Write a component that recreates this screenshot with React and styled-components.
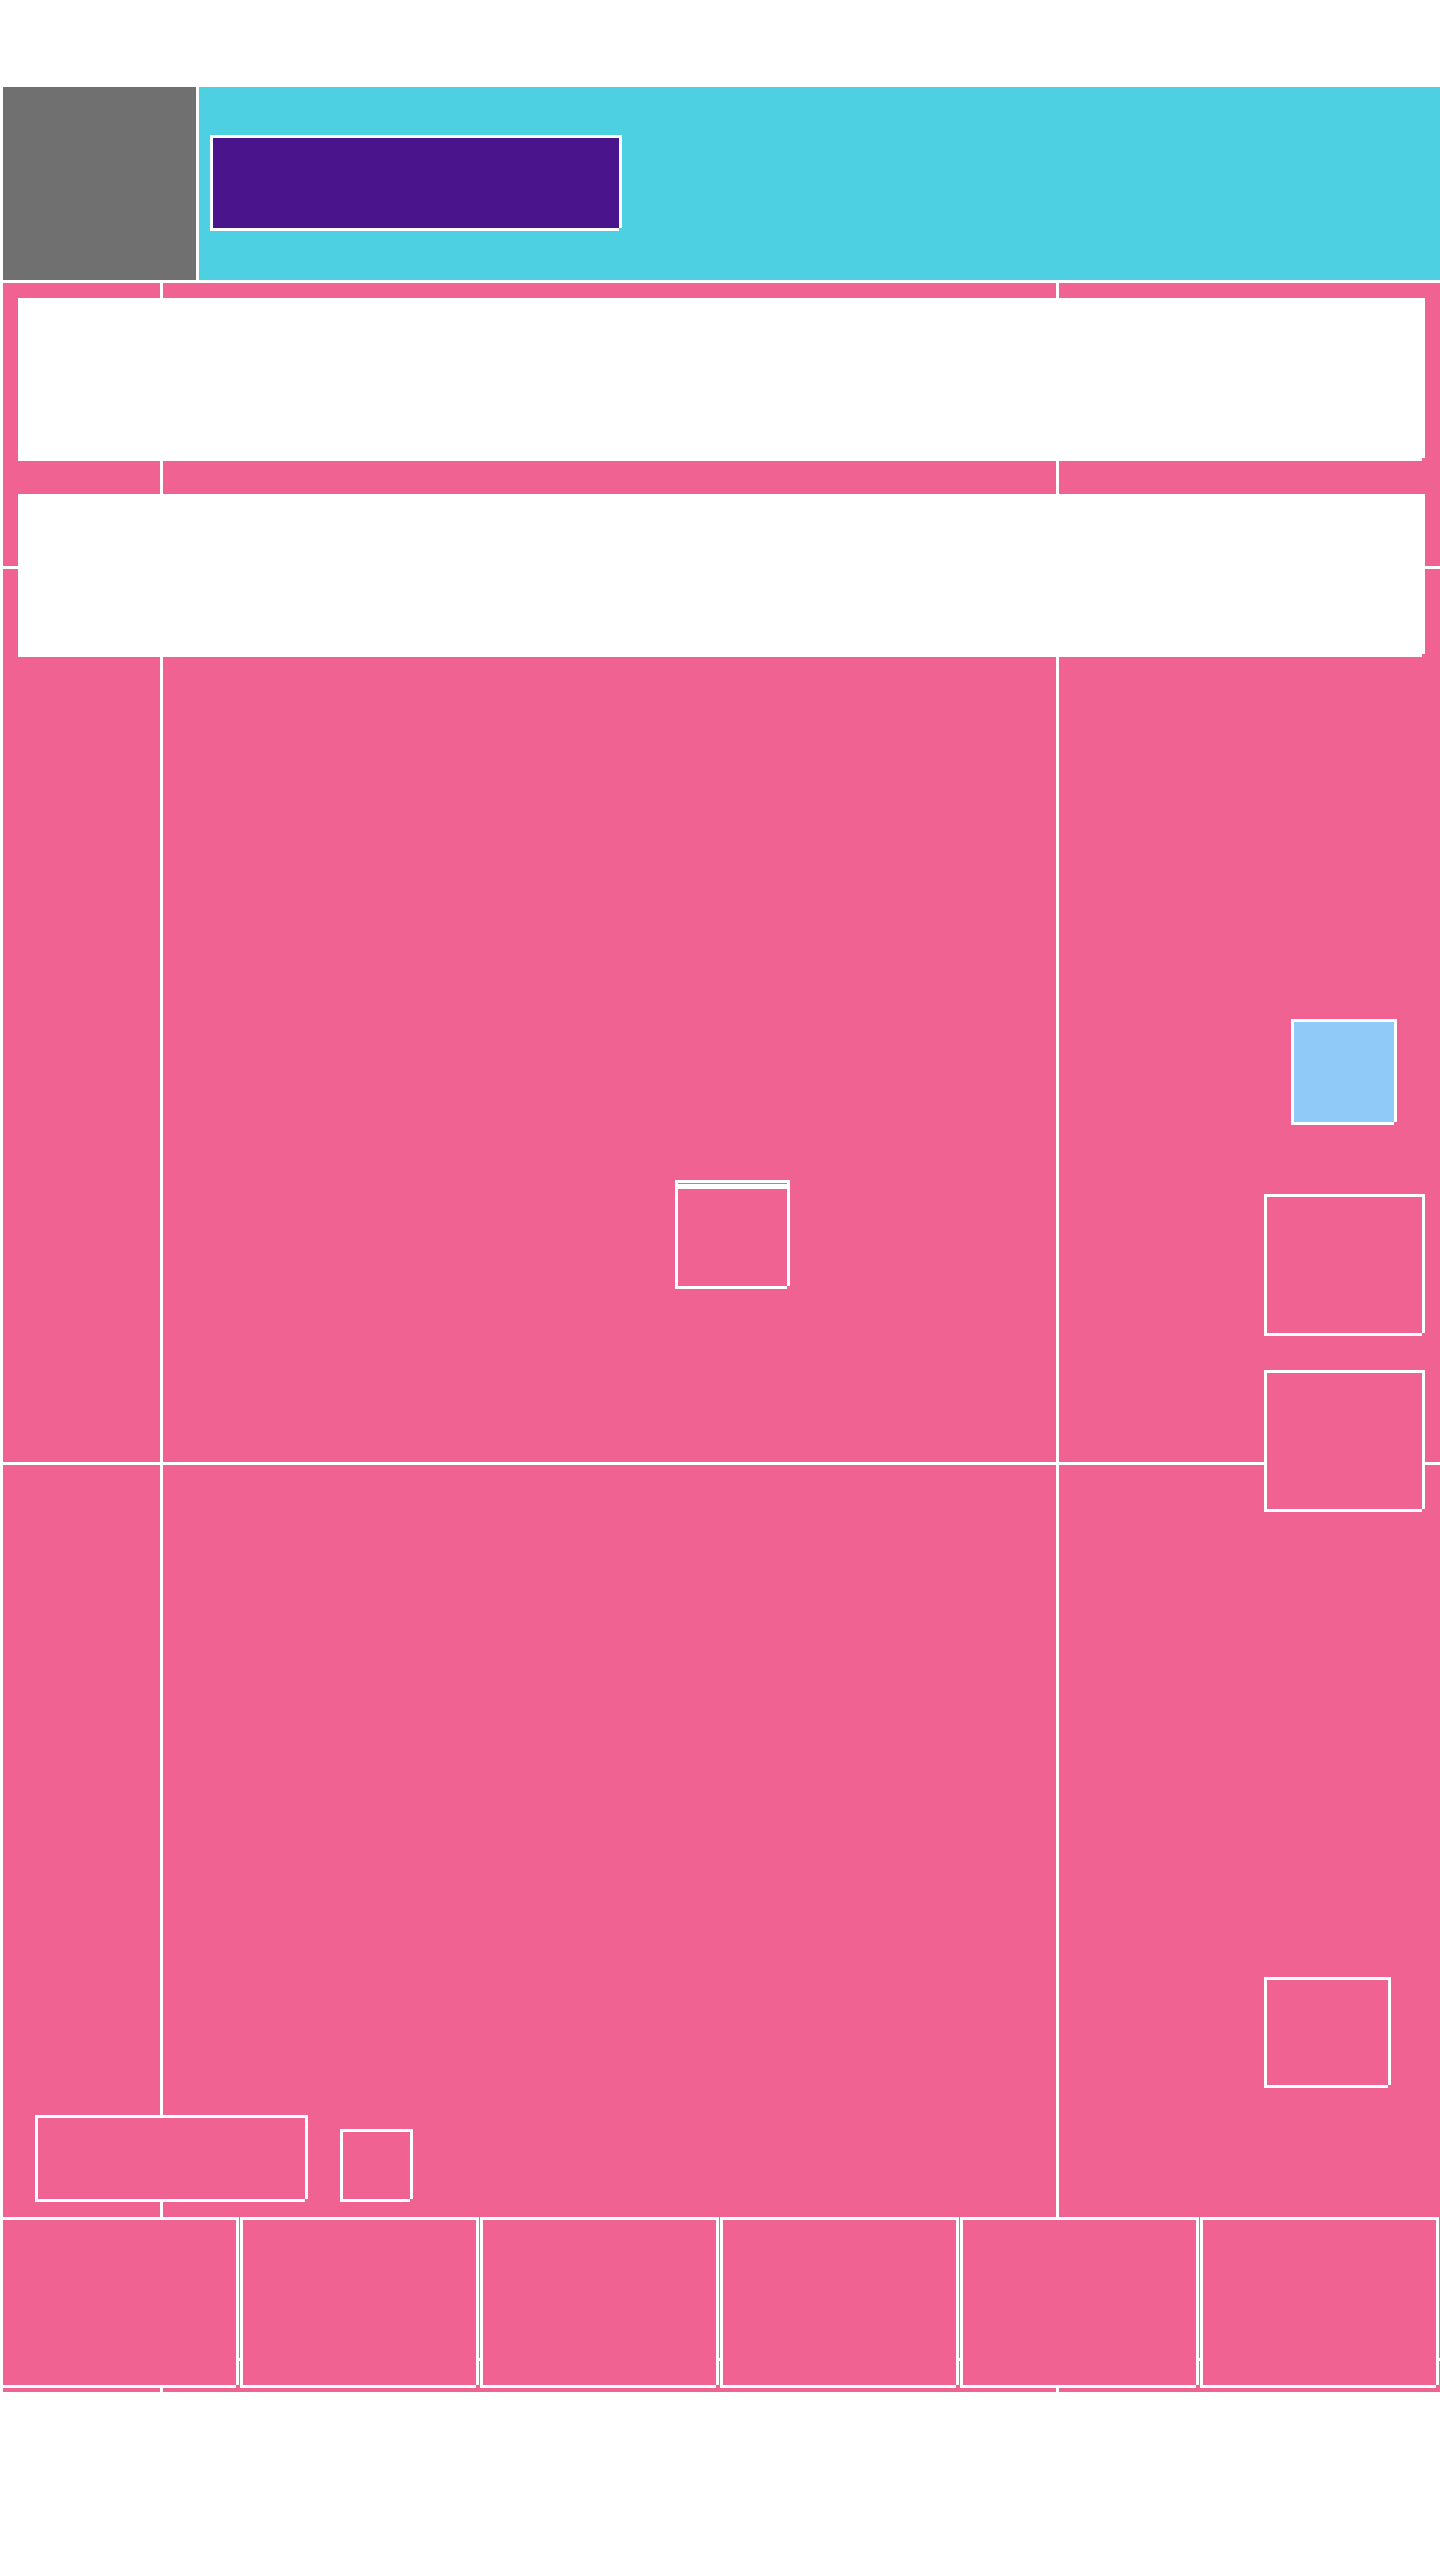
import React from "react";
import styled, { createGlobalStyle } from "styled-components";

const PINK = "#F06292";
const CYAN = "#4DD0E1";
const GRAY = "#707070";
const PURPLE = "#4A148C";
const BLUE = "#90CAF9";

const GlobalStyle = createGlobalStyle`
  html, body { margin: 0; padding: 0; background: #fff; }
  body { font-family: "Liberation Sans", Arial, sans-serif; }
  * { box-sizing: border-box; }
`;

const Page = styled.div`
  width: 1440px;
  padding-top: 87px;
  display: flex;
  flex-direction: column;
  gap: 3px;
`;

const Header = styled.header`
  display: flex;
  gap: 3px;
  padding-left: 3px;
  height: 193px;
`;

const LogoBlock = styled.div`
  width: 193px;
  background: ${GRAY};
`;

const TitleBar = styled.div`
  flex: 1;
  background: ${CYAN};
  padding: 48px 0 0 11px;
`;

const Frame = styled.div`
  position: relative;
  flex: none;
  width: ${(p) => (p.$w ? `${p.$w}px` : "auto")};
  height: ${(p) => p.$h}px;
  border: 3px solid #fff;
  background: ${(p) => p.$fill || PINK};
  &::after {
    content: "";
    position: absolute;
    right: -3px;
    bottom: -3px;
    width: 3px;
    height: 3px;
    background: ${(p) => p.$notch || PINK};
  }
`;

const Canvas = styled.main`
  display: grid;
  grid-template: 2109px / 1440px;
`;

const CellGrid = styled.div`
  grid-area: 1 / 1;
  display: grid;
  grid-template-columns: 157px 893px 1fr;
  grid-template-rows: 283px 893px 893px 1fr;
  gap: 3px;
  padding-left: 3px;
  background: #fff;
`;

const Cell = styled.div`
  background: ${PINK};
`;

const Layer = styled.div`
  grid-area: 1 / 1;
  display: flex;
  flex-direction: column;
  min-height: 0;
`;

const Band = styled(Frame)`
  margin: ${(p) => p.$top}px 15px 0 18px;
`;

const Middle = styled.div`
  flex: 1;
  display: flex;
  min-height: 0;
`;

const MainCol = styled.div`
  flex: 1;
  display: flex;
  flex-direction: column;
`;

const SideCol = styled.aside`
  width: 161px;
  margin-right: 15px;
  display: flex;
  flex-direction: column;
  align-items: flex-start;
`;

const Placed = styled(Frame)`
  margin-top: ${(p) => p.$mt || 0}px;
  margin-left: ${(p) => p.$ml || 0}px;
`;

const Stripe = styled.div`
  height: 5px;
  margin-top: 1px;
  background: #fff;
`;

const Spacer = styled.div`
  flex: 1;
`;

const BottomPair = styled.div`
  display: flex;
  align-items: flex-end;
  gap: 32px;
  margin: 0 0 15px 35px;
`;

const BottomRow = styled.div`
  display: grid;
  grid-template-columns: repeat(6, 239px);
  column-gap: 1px;
  height: 171px;
  margin-bottom: 4px;
`;

const cells = Array.from({ length: 12 });

export default function App() {
  return (
    <>
      <GlobalStyle />
      <Page>
        <Header>
          <LogoBlock />
          <TitleBar>
            <Frame $w={412} $h={96} $fill={PURPLE} $notch={CYAN} />
          </TitleBar>
        </Header>
        <Canvas>
          <CellGrid>
            {cells.map((_, i) => (
              <Cell key={i} />
            ))}
          </CellGrid>
          <Layer>
            <Band $top={15} $h={163} $fill="#fff" />
            <Band $top={33} $h={163} $fill="#fff" />
            <Middle>
              <MainCol>
                <Placed $mt={523} $ml={675} $w={115} $h={109}>
                  <Stripe />
                </Placed>
                <Spacer />
                <BottomPair>
                  <Frame $w={273} $h={87} />
                  <Frame $w={73} $h={73} />
                </BottomPair>
              </MainCol>
              <SideCol>
                <Placed $mt={362} $ml={27} $w={106} $h={106} $fill={BLUE} />
                <Placed $mt={69} $w={161} $h={142} />
                <Placed $mt={34} $w={161} $h={142} />
                <Placed $mt={465} $w={127} $h={111} />
              </SideCol>
            </Middle>
            <BottomRow>
              {Array.from({ length: 6 }).map((_, i) => (
                <Frame key={i} $h={171} />
              ))}
            </BottomRow>
          </Layer>
        </Canvas>
      </Page>
    </>
  );
}
